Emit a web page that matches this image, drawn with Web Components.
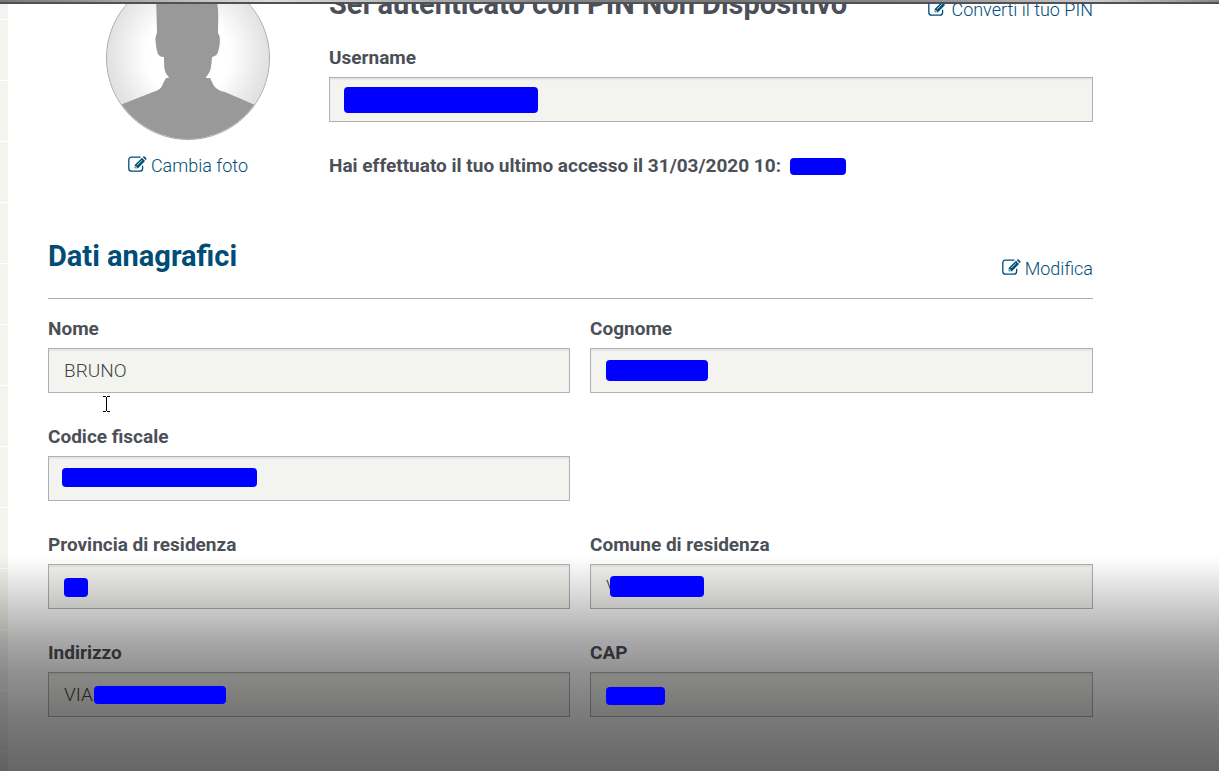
<!DOCTYPE html>
<html lang="it">
<head>
<meta charset="utf-8">
<meta name="viewport" content="width=device-width, initial-scale=1">
<title>Dati anagrafici</title>
<style>
  body { margin: 0; background: #fff; color: #4b5058; font-family: Roboto, "Liberation Sans", sans-serif; }
</style>
</head>
<body>
<profile-page>
  <user-summary>
    <edit-link slot="photo">Cambia foto</edit-link>
    <edit-link slot="action">Converti il tuo PIN</edit-link>
    <data-field label="Username"><redaction-mark style="--x:15px;--y:10px;--w:194px;--h:26px"></redaction-mark></data-field>
  </user-summary>
  <data-section heading="Dati anagrafici">
    <edit-link slot="action">Modifica</edit-link>
    <data-field label="Nome" value="BRUNO"><text-cursor></text-cursor></data-field>
    <data-field label="Cognome"><redaction-mark style="--x:16px;--y:12px;--w:102px;--h:21px"></redaction-mark></data-field>
    <data-field label="Codice fiscale"><redaction-mark style="--x:14px;--y:12px;--w:195px;--h:19px"></redaction-mark></data-field>
    <data-field label="Provincia di residenza" first><redaction-mark style="--x:16px;--y:14px;--w:24px;--h:19px"></redaction-mark></data-field>
    <data-field label="Comune di residenza" value="V"><redaction-mark style="--x:20px;--y:12px;--w:94px;--h:21px"></redaction-mark></data-field>
    <data-field label="Indirizzo" value="VIA"><redaction-mark style="--x:46px;--y:14px;--w:132px;--h:18px"></redaction-mark></data-field>
    <data-field label="CAP"><redaction-mark style="--x:16px;--y:15px;--w:59px;--h:18px"></redaction-mark></data-field>
  </data-section>
</profile-page>
<script>
class ShadowElement extends HTMLElement {
  constructor() {
    super();
    this.attachShadow({ mode: 'open' });
  }
  connectedCallback() {
    this.shadowRoot.innerHTML = this.render();
  }
}

customElements.define('profile-page', class extends ShadowElement {
  render() {
    return `<style>
      :host { display: grid; grid-template: 4px 1fr / 8px 1fr; min-height: 100vh; position: relative; overflow: hidden; }
      .bar { grid-column: 1 / -1; box-sizing: border-box; border-bottom: 2px solid #505155; z-index: 1;
        background: linear-gradient(90deg, #777 0, #999 8%, #ddd 22%, #bbb 32%, #85868a 45%, #777 60%, #8a8a8c 75%, #ccc 90%, #888 100%); }
      aside { background: repeating-linear-gradient(#f3f4ef 0 15px, #fff 15px 16px, #f3f4ef 16px 61px); }
      main { overflow: hidden; padding: 0 126px 53px 40px; }
      .shade { position: absolute; inset: auto 0 0; height: 216px; pointer-events: none;
        background: linear-gradient(transparent, rgba(0,0,0,.05) 7%, rgba(0,0,0,.2) 24%, rgba(0,0,0,.34) 40%, rgba(0,0,0,.43) 54%, rgba(0,0,0,.52) 75%, rgba(0,0,0,.6)); }
    </style>
    <div class="bar"></div><aside></aside>
    <main><slot></slot></main><div class="shade"></div>`;
  }
});

customElements.define('user-summary', class extends ShadowElement {
  render() {
    return `<style>
      :host { display: grid; grid-template-columns: 280px 1fr; column-gap: 1px; margin-top: -28px; }
      .photo { display: flex; flex-direction: column; align-items: center; gap: 14px; }
      .details { padding-top: 10px; }
      header { display: flex; justify-content: space-between; align-items: flex-end; height: 36px; margin-bottom: 23px; }
      h2 { margin: 0; font-size: 29px; line-height: 36px; font-weight: 700; }
      p { margin: 31px 0 0; font-size: 19px; line-height: 26px; font-weight: 700; display: flex; align-items: center; gap: 9px; }
      svg { display: block; flex: none; }
    </style>
    <div class="photo">
      <svg width="164" height="164" viewBox="0 0 164 164" role="img" aria-label="Foto profilo">
        <defs>
          <radialGradient id="light" cx=".5" cy=".48" r=".52"><stop offset=".5" stop-color="#fff"/><stop offset="1" stop-color="#dedede"/></radialGradient>
          <clipPath id="round"><circle cx="82" cy="82" r="81"/></clipPath>
        </defs>
        <circle cx="82" cy="82" r="81" fill="url(#light)"/>
        <path clip-path="url(#round)" fill="#999" d="M50 20C58 10 107 10 111 25C113 36 112 46 112 57C115 61 114 69 112 76Q111 80 106 81C105 93 105 95 100 101V102H104Q106 106 108 110Q112 115 119 116L149 129V166H14V129L47 116Q54 114 56 110Q58 105 60 102H63L62 100C58 96 58 91 58 81Q52 81 51 75C49 65 49 61 51 57Z"/>
        <circle cx="82" cy="82" r="81.5" fill="none" stroke="#aaa"/>
      </svg>
      <slot name="photo"></slot>
    </div>
    <div class="details">
      <header><h2>Sei autenticato con PIN Non Dispositivo</h2><slot name="action"></slot></header>
      <slot></slot>
      <p>Hai effettuato il tuo ultimo accesso il 31/03/2020 10:<redaction-mark inline style="--w:56px;--h:17px"></redaction-mark></p>
    </div>`;
  }
});

customElements.define('data-section', class extends ShadowElement {
  render() {
    return `<style>
      :host { display: block; margin-top: 59px; }
      header { display: flex; justify-content: space-between; align-items: flex-end; height: 61px; border-bottom: 1px solid #adb1b3; box-sizing: border-box; }
      h2 { margin: 0; align-self: flex-start; font-size: 29px; line-height: 36px; font-weight: 700; color: #004d78; }
      slot[name=action] { display: block; padding-bottom: 17px; }
      .fields { display: grid; grid-template-columns: 522fr 503fr; gap: 31px 20px; padding-top: 17px; }
      ::slotted([first]) { grid-column: 1; }
    </style>
    <header><h2>${this.getAttribute('heading')}</h2><slot name="action"></slot></header>
    <div class="fields"><slot></slot></div>`;
  }
});

customElements.define('data-field', class extends ShadowElement {
  render() {
    return `<style>
      :host { display: block; }
      label { display: block; margin-bottom: 6px; font-size: 19px; line-height: 26px; font-weight: 700; }
      .box { position: relative; }
      input { display: block; box-sizing: border-box; width: 100%; height: 45px; margin: 0; padding: 0 15px; border: 1px solid #adb1b3; border-radius: 0;
        background: #f3f4ef; box-shadow: inset 0 2px 2px rgba(0,0,0,.06); color: #444; font: 300 19px Roboto, "Liberation Sans", sans-serif; outline: 0; }
    </style>
    <label for="value">${this.getAttribute('label')}</label>
    <div class="box"><input id="value" type="text" readonly value="${this.getAttribute('value') || ''}"><slot></slot></div>`;
  }
});

customElements.define('redaction-mark', class extends ShadowElement {
  render() {
    return `<style>
      :host { position: absolute; z-index: 2; left: var(--x); top: var(--y); width: var(--w); height: var(--h); background: #00f; border-radius: 4px; }
      :host([inline]) { position: static; display: inline-block; }
    </style>`;
  }
});

customElements.define('edit-link', class extends ShadowElement {
  render() {
    return `<style>
      :host { display: block; }
      a { display: flex; align-items: center; gap: 4px; color: #004d78; font-size: 18px; line-height: 24px; font-weight: 300; text-decoration: none; white-space: nowrap; }
      svg { display: block; margin-bottom: 4px; }
    </style>
    <a href="#"><svg width="19" height="16" viewBox="0 0 19 16" aria-hidden="true">
      <path d="M12.5 1.2H3.6Q.8 1.2 .8 4v8.4q0 2.8 2.8 2.8h8.2q2.8 0 2.8-2.8V9.8" fill="none" stroke="currentColor" stroke-width="1.3"/>
      <path d="M6.7 12.3V9L14 1.8 17 4.9 9.9 12.3ZM14.7 1.1 15.4.5q.6-.5 1.2 0L18.3 2.2q.5.6 0 1.2L17.6 4.1Z" fill="currentColor"/>
      <path d="M9 9.2 14 4.2M7.7 10v1.3H9" fill="none" stroke="#fff" stroke-width=".8"/>
    </svg><slot></slot></a>`;
  }
});

customElements.define('text-cursor', class extends ShadowElement {
  render() {
    return `<style>
      :host { position: absolute; left: 55px; top: 48px; width: 7px; height: 16px; }
      svg { display: block; }
    </style>
    <svg width="7" height="16" aria-hidden="true"><path d="M0 .5H3M4 .5H7M3.500 1V15M0 15.500H3M4 15.500H7" fill="none" stroke="#000"/></svg>`;
  }
});
</script>
</body>
</html>
